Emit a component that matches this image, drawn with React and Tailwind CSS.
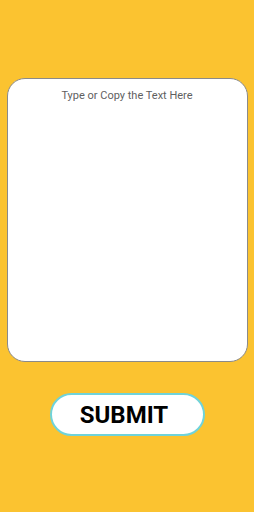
export default function App() {
  return (
    <div
      className="w-[254px] h-[512px] bg-[#fbc330] flex flex-col items-center"
      style={{ fontFamily: "Roboto, 'Liberation Sans', sans-serif" }}
    >
      <div className="mt-[78px] w-[241px] h-[284px] bg-white border border-[#8a8a8a] rounded-[18px] flex justify-center">
        <textarea
          placeholder="Type or Copy the Text Here"
          className="w-full h-full bg-transparent resize-none outline-none text-center text-[11px] pt-[9px] px-3 text-[#333] placeholder:text-[#5f5f5f]"
        />
      </div>
      <button className="mt-[31px] w-[155px] h-[43px] bg-white border-2 border-[#6fd3da] rounded-[22px] text-[24px] font-bold text-black pr-[6px]">
        SUBMIT
      </button>
    </div>
  );
}
